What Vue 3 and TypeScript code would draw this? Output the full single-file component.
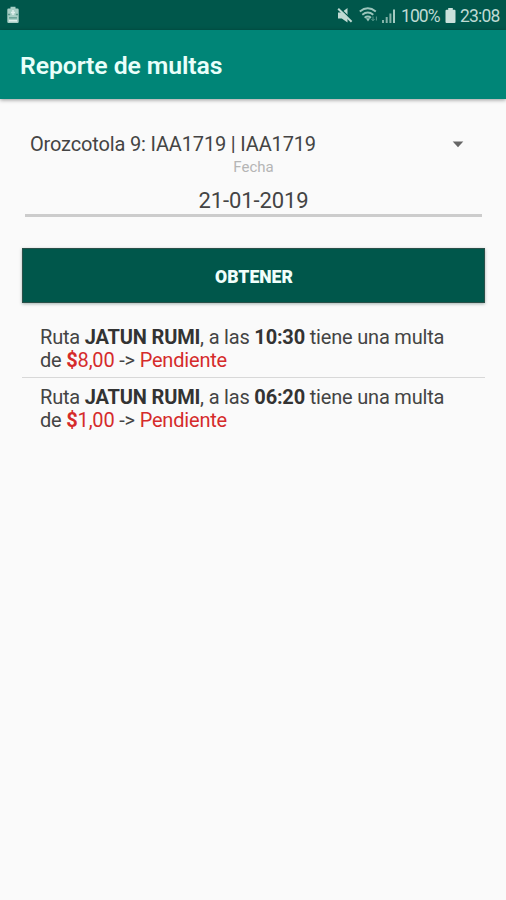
<script setup lang="ts">
interface Fine {
  route: string
  time: string
  amount: string
  status: string
}

const fines: Fine[] = [
  { route: 'JATUN RUMI', time: '10:30', amount: '8,00', status: 'Pendiente' },
  { route: 'JATUN RUMI', time: '06:20', amount: '1,00', status: 'Pendiente' },
]
</script>

<template>
  <div class="screen">
    <header class="status">
      <svg class="charge" width="14" height="18" viewBox="0 0 14 18">
        <path d="M4.5 .8h5v1.7h2q1.2 0 1.2 1.2v12q0 1.3-1.2 1.3h-9q-1.2 0-1.2-1.3v-12q0-1.2 1.2-1.2h2z" fill="#a9cfc6" />
        <path d="M2 8.5h2.2M9.8 8.5H12M3 11.8h8" stroke="#5b998c" stroke-width="1.3" />
        <path d="M7 4v5M5 6.5h4M3 14.8h8" stroke="#e0f0ec" stroke-width="1.5" />
      </svg>
      <div class="indicators">
        <svg class="mute" width="16" height="18" viewBox="0 0 16 18">
          <path d="M1 5.5h3.5L10.5 1v14.5L4.8 11.5H1z" fill="#bfdad3" />
          <path d="M2.5 1l13 12.6" stroke="#00574b" stroke-width="1.4" />
          <path d="M1.2 1.8l13.4 13" stroke="#bfdad3" stroke-width="2" />
        </svg>
        <svg class="wifi" width="20" height="16" viewBox="0 0 20 16">
          <g fill="none" stroke="#9bc5bb" stroke-width="1.9">
            <path d="M.8 4.6q8-6.5 16 0" />
            <path d="M3.3 7.8q5.5-4.5 11 0" />
            <path d="M5.6 10.8q3.2-2.5 6.4 0" />
          </g>
          <path d="M6.8 11.2h4.4L9 14.4z" fill="#9bc5bb" />
          <path d="M14 9.5v4m-1.5-1.5l1.5 1.8 1.5-1.8M17.4 13.5v-4" fill="none" stroke="#5a9b8e" stroke-width="1" />
        </svg>
        <svg class="signal" width="15" height="16" viewBox="0 0 15 16">
          <path d="M1 12h2v3H1zM4.7 9h2v6h-2zM8.4 5.5h2V15h-2z" fill="#84b3a9" />
          <path d="M12 1.5h2V15h-2z" fill="#a5cbc2" />
        </svg>
        <span class="percent">100%</span>
        <svg class="battery" width="11" height="16" viewBox="0 0 11 16">
          <path d="M3.2 0h4.6v1.7h1.7q1 0 1 1v11.4q0 1-1 1h-8q-1 0-1-1V2.7q0-1 1-1h1.7z" fill="#cbe1db" />
        </svg>
        <span class="clock">23:08</span>
      </div>
    </header>
    <div class="toolbar"><h1>Reporte de multas</h1></div>
    <main>
      <div class="picker">
        <span>Orozcotola 9: IAA1719 | IAA1719</span>
        <svg width="12" height="7" viewBox="0 0 12 7"><path d="M.7.5h10.6L6 6.3z" fill="#666" /></svg>
      </div>
      <div class="date">
        <label>Fecha</label>
        <span>21-01-2019</span>
      </div>
      <button type="button"><span>OBTENER</span></button>
      <ul>
        <li v-for="fine in fines" :key="fine.time">
          Ruta <b>{{ fine.route }}</b>, a las <b>{{ fine.time }}</b> tiene una multa<br />
          de <span class="red"><b>$</b>{{ fine.amount }}</span> -&gt; <span class="red">{{ fine.status }}</span>
        </li>
      </ul>
    </main>
  </div>
</template>

<style>
body {
  margin: 0;
  background: #fafafa;
}
</style>

<style scoped>
.screen {
  width: 506px;
  height: 900px;
  background: #fafafa;
  color: #444;
  font-family: Roboto, sans-serif;
  overflow: hidden;
}
svg {
  display: block;
  flex: none;
}
.status {
  height: 30px;
  box-sizing: border-box;
  background: #00574b;
  display: flex;
  justify-content: space-between;
  padding: 0 5px 0 6px;
}
.charge {
  margin-top: 6px;
}
.indicators {
  display: flex;
  align-items: flex-start;
  color: #bfdad3;
  font-size: 17.5px;
  line-height: 20px;
  white-space: nowrap;
}
.mute {
  margin-top: 7px;
}
.wifi {
  margin: 7px 0 0 6px;
}
.signal {
  margin: 8px 0 0 2px;
}
.percent {
  margin: 6px 0 0 5px;
  width: 39px;
  letter-spacing: -0.9px;
}
.battery {
  margin: 8px 0 0 5px;
}
.clock {
  margin: 6px 0 0 4px;
  width: 41px;
  letter-spacing: -0.8px;
}
.toolbar {
  position: relative;
  height: 69px;
  box-sizing: border-box;
  padding: 21px 20px 0;
  background: #008577;
  box-shadow: 0 1px 4px rgba(0, 0, 0, 0.4);
}
h1 {
  margin: 0;
  color: #e9fffa;
  font-size: 24.8px;
  line-height: 30px;
  font-weight: 600;
  letter-spacing: -0.1px;
  white-space: nowrap;
}
main {
  padding: 30px 21px 0 22px;
}
.picker {
  height: 30px;
  padding: 0 21px 0 8px;
  display: flex;
  align-items: center;
  justify-content: space-between;
  font-size: 20px;
  letter-spacing: -0.16px;
  white-space: nowrap;
}
.date {
  height: 58px;
  box-sizing: border-box;
  margin: 0 3px;
  border-bottom: 3px solid #ccc;
  display: flex;
  flex-direction: column;
  align-items: center;
}
.date label {
  color: #b5b5b5;
  font-size: 15px;
  line-height: 17px;
}
.date span {
  margin-top: 11px;
  font-size: 22px;
  line-height: 27px;
  letter-spacing: -0.1px;
}
button {
  display: flex;
  align-items: center;
  justify-content: center;
  width: 100%;
  height: 55px;
  margin: 31px 0 0;
  padding: 2px 0 0 1px;
  border: 1px solid #2b4f48;
  background: #00574b;
  box-shadow: 0 1px 3px rgba(0, 50, 40, 0.35);
  color: #f0fffb;
  font-family: Roboto, sans-serif;
  font-size: 17.6px;
  font-weight: 900;
}
ul {
  list-style: none;
  margin: 23px 0 0;
  padding: 0;
}
li {
  box-sizing: border-box;
  height: 61px;
  padding: 8px 0 0 18px;
  font-size: 20px;
  line-height: 23px;
  letter-spacing: -0.19px;
  white-space: nowrap;
}
li:first-child {
  height: 52px;
  padding-top: 0;
  border-bottom: 1px solid #d8d8d8;
}
li b {
  font-weight: 700;
  color: #333;
}
.red,
.red b {
  color: #d52b2b;
}
</style>
